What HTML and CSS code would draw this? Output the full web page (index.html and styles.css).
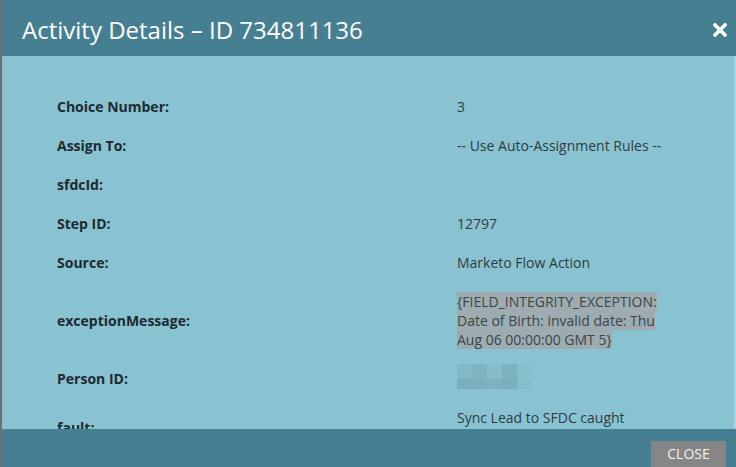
FILE: index.html
```html
<!DOCTYPE html>
<html>
<head>
<meta charset="utf-8">
<link rel="stylesheet" href="styles.css">
</head>
<body>
<div class="dialog">
  <div class="header">
    <div class="title">Activity Details – ID 734811136</div>
    <svg class="x" width="14" height="14" viewBox="0 0 14 14"><path d="M2 2 L12 12 M12 2 L2 12" stroke="#fff" stroke-width="3.6" stroke-linecap="square"/></svg>
  </div>
  <div class="content">
    <div class="details">
      <div class="lab">Choice Number:</div><div class="val">3</div>
      <div class="lab">Assign To:</div><div class="val">-- Use Auto-Assignment Rules --</div>
      <div class="lab">sfdcId:</div><div class="val"></div>
      <div class="lab">Step ID:</div><div class="val">12797</div>
      <div class="lab">Source:</div><div class="val">Marketo Flow Action</div>
      <div class="lab">exceptionMessage:</div><div class="val"><span class="sel">{FIELD_INTEGRITY_EXCEPTION: Date of Birth: invalid date: Thu Aug 06 00:00:00 GMT 5}</span></div>
      <div class="lab">Person ID:</div><div class="val"><div class="blur"><i class="p1"></i><i class="p2"></i><i class="p3"></i><i class="p4"></i><i class="p5"></i><i class="q1"></i><i class="q2"></i><i class="q3"></i><i class="q4"></i><i class="q5"></i></div></div>
      <div class="lab">fault:</div><div class="val">Sync Lead to SFDC caught exception error</div>
    </div>
    <div class="edge"></div>
  </div>
  <div class="footer">
    <button class="close">CLOSE</button>
  </div>
</div>
</body>
</html>
```

FILE: styles.css
```css
html, body {
  margin: 0;
  padding: 0;
}
body {
  background: #6d7173;
  font-family: "Open Sans", "Liberation Sans", sans-serif;
  width: 736px;
  height: 467px;
  overflow: hidden;
}
.dialog {
  margin-left: 2px;
  width: 734px;
  height: 467px;
  display: flex;
  flex-direction: column;
}
.header {
  height: 56px;
  flex: none;
  background: #467f91;
  display: flex;
  align-items: center;
  justify-content: space-between;
  padding: 0 9px 0 20px;
}
.title {
  color: #ffffff;
  font-size: 24px;
  margin-top: 2px;
}
.x {
  margin-top: 4px;
}
.content {
  flex: 1;
  background: #89c3d2;
  overflow: hidden;
  display: flex;
  min-height: 0;
}
.details {
  flex: 1;
  display: grid;
  grid-template-columns: 400px 218px;
  padding: 31px 0 0 55px;
  align-content: start;
  font-size: 14px;
  line-height: 19px;
}
.lab, .val {
  padding: 10px 0;
  display: flex;
  align-items: center;
}
.val {
  display: block;
  color: #2f3c41;
}
.lab {
  font-weight: 700;
  color: #1d2a2f;
}
.sel {
  background: #9eacb1;
  color: #3b4649;
}
.edge {
  width: 2px;
  background: #a9d5e0;
  flex: none;
}
.blur {
  width: 75px;
  height: 25px;
  margin: -5px 0 -1px 0;
  display: grid;
  grid-template-columns: 15px 15px 15px 15px 15px;
  grid-template-rows: 15px 10px;
}
.blur i { display: block; }
.p1 { background: #82b9c7; }
.p2 { background: #7eb4c2; }
.p3 { background: #86bdcb; }
.p4 { background: #7db3c1; }
.p5 { background: #86bfcd; }
.q1 { background: #7aafbd; }
.q2 { background: #7bb1bf; }
.q3 { background: #7db2c0; }
.q4 { background: #7ab0be; }
.q5 { background: #85bdcb; }
.footer {
  height: 38px;
  flex: none;
  background: #467f91;
  display: flex;
  justify-content: flex-end;
  align-items: flex-end;
  padding-right: 10px;
}
.close {
  width: 75px;
  height: 26px;
  border: none;
  background: #878585;
  color: #f2f2f2;
  font-family: "Open Sans", "Liberation Sans", sans-serif;
  font-size: 14px;
  padding: 0 0 1px 0;
}
```
